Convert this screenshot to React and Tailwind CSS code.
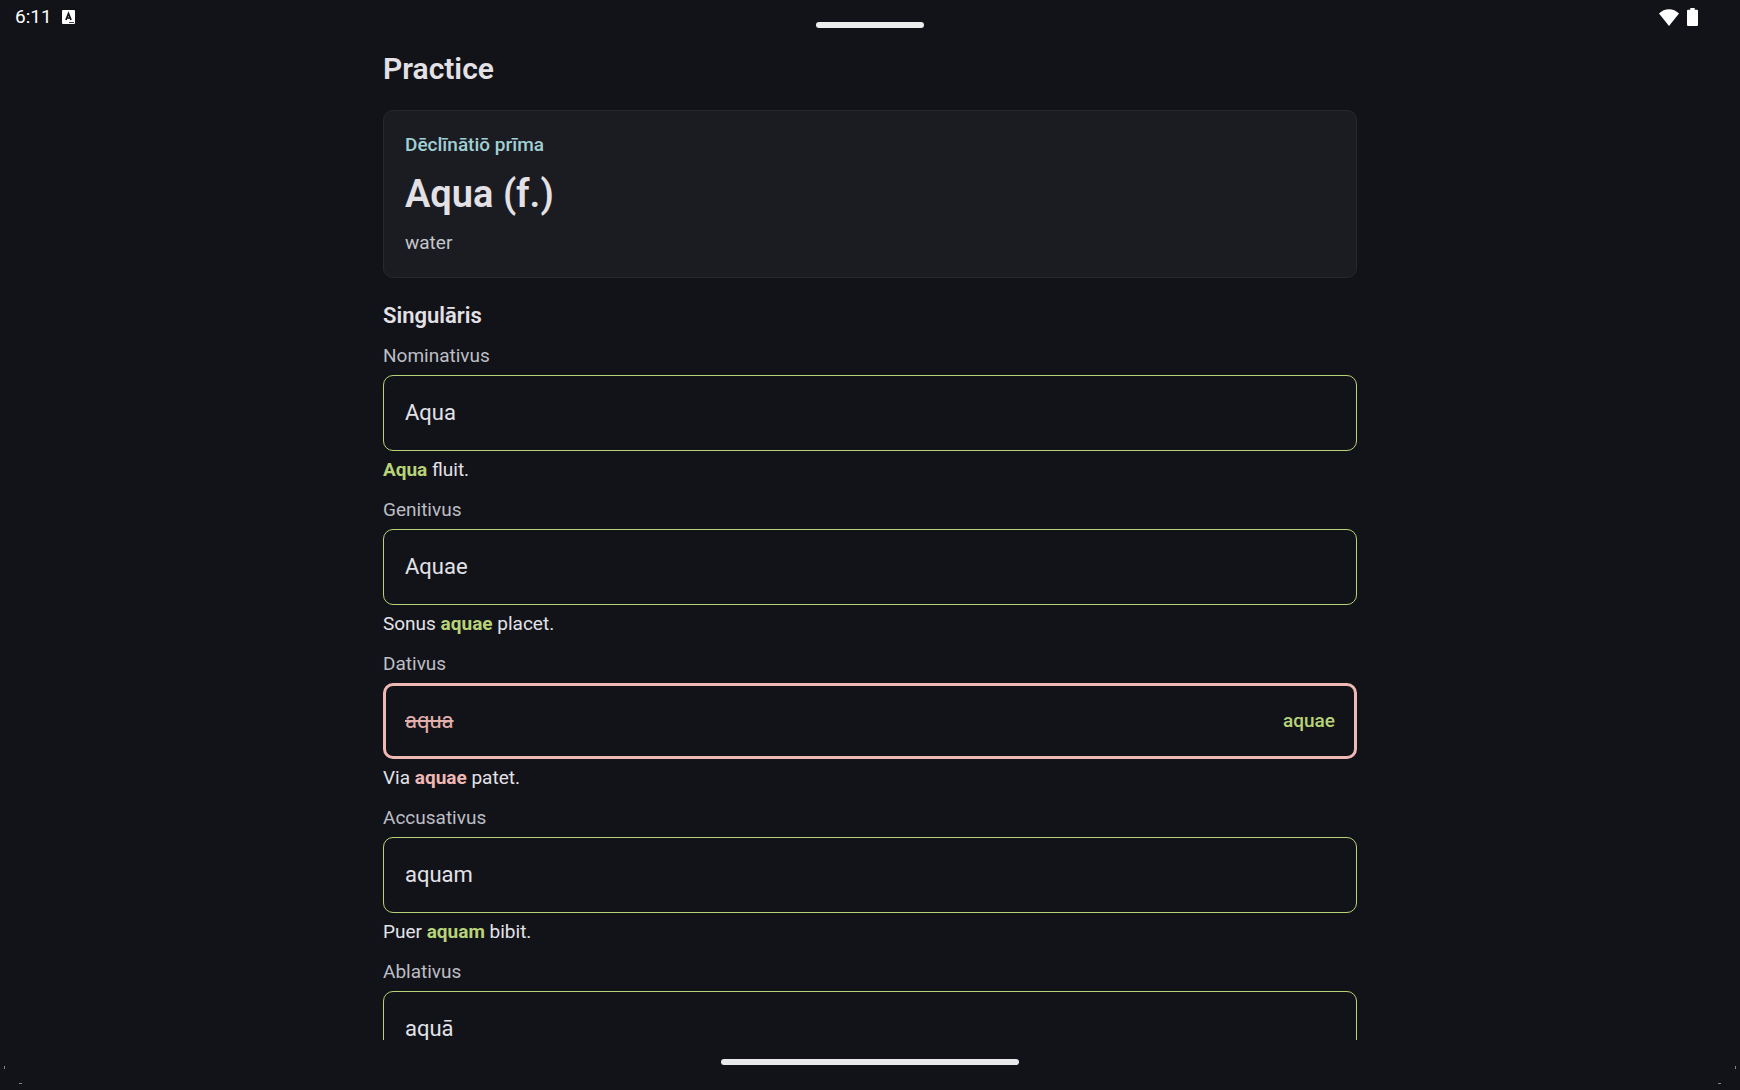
import React, { useState } from "react";
import clsx from "clsx";

const CASES = [
  { id: "nominativus", label: "Nominativus", value: "Aqua", answer: "Aqua", example: ["", " fluit."] },
  { id: "genitivus", label: "Genitivus", value: "Aquae", answer: "aquae", example: ["Sonus ", " placet."] },
  { id: "dativus", label: "Dativus", value: "aqua", answer: "aquae", example: ["Via ", " patet."] },
  { id: "accusativus", label: "Accusativus", value: "aquam", answer: "aquam", example: ["Puer ", " bibit."] },
  { id: "ablativus", label: "Ablativus", value: "aquā", answer: "aquā" },
];

function StatusBar() {
  return (
    <header className="relative flex h-9 shrink-0 items-start justify-between pl-[15px] pr-[42px] pt-1 text-white">
      <div className="flex h-[26px] items-center gap-2.5">
        <span className="text-[19px] leading-[26px]">6:11</span>
        <svg width="13" height="14" viewBox="0 0 13 14" aria-hidden="true">
          <rect width="13" height="14" rx="1" fill="#fff" />
          <path d="M3.900 10 6.500 3.600 9.100 10M4.800 8h3.400" fill="none" stroke="#121318" strokeWidth="1.7" />
          <path d="M7 12.500h5" stroke="#121318" strokeWidth="0.8" />
        </svg>
      </div>

      <div className="absolute left-1/2 top-[22px] h-1.5 w-[108px] -translate-x-1/2 rounded-sm bg-[#eceeed]" />

      <div className="flex h-[26px] items-center gap-2">
        <svg width="20" height="17" viewBox="0 0 20 17" aria-hidden="true">
          <path d="M0 4.600C2.800 1.800 6.200.3 10 .3s7.200 1.500 10 4.300L10 17Z" fill="#fff" />
        </svg>
        <svg width="11" height="18" viewBox="0 0 11 18" aria-hidden="true">
          <path d="M3.300 0h4.400v1.800H10a1 1 0 0 1 1 1V17a1 1 0 0 1-1 1H1a1 1 0 0 1-1-1V2.800a1 1 0 0 1 1-1h2.300Z" fill="#fff" />
        </svg>
      </div>
    </header>
  );
}

function WordCard() {
  return (
    <section className="mt-[23px] rounded-[10px] border border-[#26282d] bg-[#1b1c21] px-[21px] py-5 leading-7">
      <p className="text-[19px] font-medium text-[#a0cfd5]">Dēclīnātiō prīma</p>
      <h2 className="mt-2.5 text-[38px] font-semibold leading-[50px] text-[#e4e1e6]">Aqua (f.)</h2>
      <p className="mt-2.5 text-[19px] text-[#c5c6cc]">water</p>
    </section>
  );
}

function CaseField({ item }) {
  const [value, setValue] = useState(item.value);
  const correct = value.toLowerCase() === item.answer.toLowerCase();

  return (
    <div>
      <label htmlFor={item.id} className="block text-[19px] leading-7 text-[#bdbec5]">
        {item.label}
      </label>
      <div
        className={clsx(
          "mt-[5px] flex h-[76px] items-center rounded-[10px]",
          correct ? "border border-[#b8d278] px-[21px]" : "border-[3px] border-[#efb8b5] px-[19px]"
        )}
      >
        <input
          id={item.id}
          type="text"
          value={value}
          onChange={(e) => setValue(e.target.value)}
          className={clsx(
            "min-w-0 flex-1 bg-transparent text-[22px] leading-8 outline-none",
            correct ? "text-[#e3e2e9]" : "text-[#e3afac] line-through"
          )}
        />
        {!correct && <span className="text-[19px] font-medium leading-7 text-[#b8d278]">{item.answer}</span>}
      </div>
      {item.example && (
        <p className="mt-[5px] text-[19px] leading-7 text-[#e3e2e9]">
          {item.example[0]}
          <strong className={clsx("font-bold", correct ? "text-[#b8d278]" : "text-[#efb8b5]")}>{item.answer}</strong>
          {item.example[1]}
        </p>
      )}
    </div>
  );
}

function NavigationBar() {
  return (
    <footer className="relative flex h-[50px] shrink-0 justify-center pt-[19px]">
      <div className="h-1.5 w-[298px] rounded-full bg-[#e9e9eb]" />
      <svg width="24" height="24" viewBox="0 0 24 24" className="absolute bottom-1 left-0" aria-hidden="true">
        <path d="M4.500 4v3M19 21.500h3" stroke="#85868a" />
      </svg>
      <svg width="24" height="24" viewBox="0 0 24 24" className="absolute bottom-1 right-0" aria-hidden="true">
        <path d="M19.500 4v3M5 21.500H2" stroke="#85868a" />
      </svg>
    </footer>
  );
}

export default function App() {
  return (
    <div className="flex h-screen flex-col bg-[#121318] font-['Roboto',sans-serif] text-[#e3e2e9]">
      <StatusBar />
      <main className="min-h-0 flex-1 overflow-y-auto [scrollbar-width:none]">
        <div className="mx-auto w-full max-w-[974px] pt-[15px]">
          <h1 className="text-[30px] font-semibold leading-9 text-[#e4e1e6]">Practice</h1>
          <WordCard />
          <h3 className="mt-6 text-[22px] font-semibold leading-7 text-[#e4e1e6]">Singulāris</h3>
          <form className="mt-3 flex flex-col gap-3 pb-6" onSubmit={(e) => e.preventDefault()}>
            {CASES.map((item) => (
              <CaseField key={item.id} item={item} />
            ))}
          </form>
        </div>
      </main>
      <NavigationBar />
    </div>
  );
}
